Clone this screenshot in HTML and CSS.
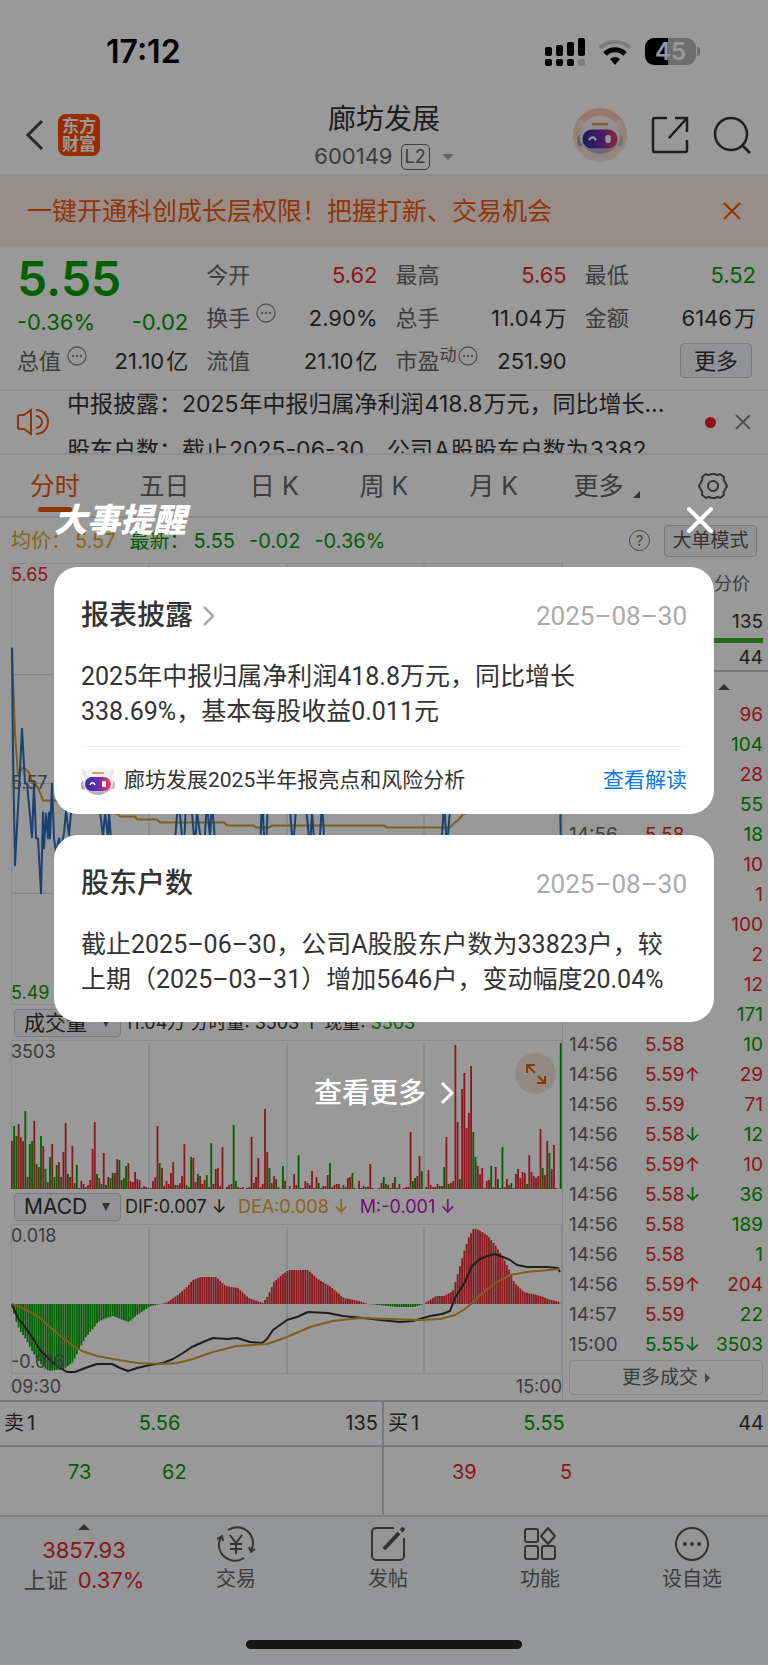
FILE: index.html
```html
<!DOCTYPE html>
<html lang="zh-CN">
<head>
    <meta charset="UTF-8">
    <meta name="viewport" content="width=device-width, initial-scale=1.0">
    <title>廊坊发展 600149</title>
    <link rel="stylesheet" href="styles.css">
</head>
<body>
    <svg class="defs" width="0" height="0">
        <defs>
            <linearGradient id="visor" x1="0" y1="0" x2="1" y2="0">
                <stop offset="0" stop-color="#2b2f9e"/>
                <stop offset="0.5" stop-color="#6a2fb0"/>
                <stop offset="1" stop-color="#f0405a"/>
            </linearGradient>
            <linearGradient id="shell" x1="0" y1="0" x2="0" y2="1">
                <stop offset="0" stop-color="#fbf8f7"/>
                <stop offset="0.7" stop-color="#e6e1e4"/>
                <stop offset="1" stop-color="#a9a3ac"/>
            </linearGradient>
            <symbol id="robot" viewBox="0 0 34 28">
                <path d="M2 1c-2 4-1 8 2 9l5-5C6 5 3 4 2 1zM32 1c2 4 1 8-2 9l-5-5c3 0 6-1 7-4z" fill="#eae5e5"/>
                <ellipse cx="2.500" cy="18" rx="2.500" ry="4.500" fill="#aaa4b0"/>
                <ellipse cx="31.500" cy="18" rx="2.500" ry="4.500" fill="#c4bfc6"/>
                <path d="M17 0C8 0 3 6 2 15c0 7 5 12 15 13 10-1 15-6 15-13C31 6 26 0 17 0z" fill="url(#shell)"/>
                <rect x="11" y="5" width="12" height="2" rx="1" fill="#e39a5b"/>
                <rect x="4" y="10" width="26" height="14" rx="7" fill="url(#visor)"/>
                <path d="M9 18c1-3 4-3 5 0" fill="none" stroke="#fff" stroke-width="1.500"/>
                <rect x="21" y="14" width="4" height="6" rx="1.500" fill="#fff"/>
            </symbol>
            <symbol id="more-dots" viewBox="0 0 20 20">
                <circle cx="10" cy="10" r="9" fill="none" stroke="currentColor" stroke-width="1.300"/>
                <circle cx="6" cy="10" r="1.200" fill="currentColor"/>
                <circle cx="10" cy="10" r="1.200" fill="currentColor"/>
                <circle cx="14" cy="10" r="1.200" fill="currentColor"/>
            </symbol>
        </defs>
    </svg>

    <div class="page">
        <div class="status-bar">
            <span class="time">17:12</span>
            <div class="status-icons">
                <svg width="40" height="28" viewBox="0 0 40 28">
                    <rect x="0" y="9" width="7" height="9" rx="2"/>
                    <rect x="11" y="7" width="7" height="11" rx="2"/>
                    <rect x="22" y="4" width="7" height="14" rx="2"/>
                    <rect x="33" y="0" width="7" height="18" rx="2"/>
                    <rect x="0" y="21" width="7" height="7" rx="2"/>
                    <rect x="11" y="21" width="7" height="7" rx="2"/>
                    <rect x="22" y="21" width="7" height="7" rx="2"/>
                    <rect x="33" y="21" width="7" height="7" rx="2" fill="#d0d0d0"/>
                </svg>
                <svg width="34" height="26" viewBox="0 0 34 26">
                    <path d="M2 9a22 22 0 0 1 30 0" fill="none" stroke="#d0d0d0" stroke-width="4"/>
                    <path d="M7 15a14 14 0 0 1 20 0" fill="none" stroke="#000" stroke-width="5"/>
                    <path d="M17 26l-5-6a8 8 0 0 1 10 0z"/>
                </svg>
                <div class="battery"><span>45</span></div>
            </div>
        </div>

        <header class="top-bar">
            <div class="top-left">
                <button class="icon-btn" aria-label="返回">
                    <svg width="20" height="32" viewBox="0 0 20 32"><path d="M17 2L3 16l14 14" fill="none" stroke="#444" stroke-width="3"/></svg>
                </button>
                <a href="#" class="logo">东方<br>财富</a>
            </div>
            <div class="stock">
                <h1>廊坊发展</h1>
                <div class="code">600149 <span class="level">L2</span><span class="caret"></span></div>
            </div>
            <div class="top-right">
                <button class="icon-btn avatar" aria-label="助手"><svg width="46" height="38"><use href="#robot"/></svg></button>
                <button class="icon-btn" aria-label="分享">
                    <svg width="38" height="38" viewBox="0 0 38 38" fill="none" stroke="#333" stroke-width="2.500"><path d="M16 2H4a2 2 0 0 0-2 2v30a2 2 0 0 0 2 2h30a2 2 0 0 0 2-2V24M24 2h12v14M36 2L18 22"/></svg>
                </button>
                <button class="icon-btn" aria-label="搜索">
                    <svg width="38" height="38" viewBox="0 0 38 38" fill="none" stroke="#333" stroke-width="2.500"><circle cx="18" cy="18" r="16"/><path d="M29 29l8 8"/></svg>
                </button>
            </div>
        </header>

        <div class="banner">
            <span>一键开通科创成长层权限！把握打新、交易机会</span>
            <button class="icon-btn" aria-label="关闭">
                <svg width="18" height="18" viewBox="0 0 18 18"><path d="M1 1l16 16M17 1L1 17" stroke="#f05a0a" stroke-width="2"/></svg>
            </button>
        </div>

        <section class="quote">
            <div class="quote-col">
                <div class="price green">5.55</div>
                <div class="cell green"><span>-0.36%</span><span>-0.02</span></div>
                <div class="cell"><label>总值<svg class="dots"><use href="#more-dots"/></svg></label><span>21.10<i>亿</i></span></div>
            </div>
            <div class="quote-col">
                <div class="cell"><label>今开</label><span class="red">5.62</span></div>
                <div class="cell"><label>换手<svg class="dots"><use href="#more-dots"/></svg></label><span>2.90%</span></div>
                <div class="cell"><label>流值</label><span>21.10<i>亿</i></span></div>
            </div>
            <div class="quote-col">
                <div class="cell"><label>最高</label><span class="red">5.65</span></div>
                <div class="cell"><label>总手</label><span>11.04<i>万</i></span></div>
                <div class="cell"><label>市盈<sup>动</sup><svg class="dots tight"><use href="#more-dots"/></svg></label><span>251.90</span></div>
            </div>
            <div class="quote-col">
                <div class="cell"><label>最低</label><span class="green">5.52</span></div>
                <div class="cell"><label>金额</label><span>6146<i>万</i></span></div>
                <div class="cell end"><button class="more-btn">更多</button></div>
            </div>
        </section>

        <section class="news">
            <svg width="32" height="28" viewBox="0 0 32 28" fill="none" stroke="#f05a0a" stroke-width="2"><path d="M14 2v24l-7-5H3a2 2 0 0 1-2-2V9a2 2 0 0 1 2-2h4zM19 8a6 6 0 0 1 0 12M19 2a12 12 0 0 1 0 24"/></svg>
            <div class="news-list">
                <p>中报披露：2025<i>年中报归属净利润</i><i>418.8</i><i>万元，同比增长</i>...</p>
                <p>股东户数：截止<i>2025-06-30</i>，公司<i>A</i><i>股股东户数为</i><i>3382</i></p>
            </div>
            <span class="red-dot"></span>
            <button class="icon-btn" aria-label="关闭"><svg width="16" height="16" viewBox="0 0 16 16"><path d="M1 1l14 14M15 1L1 15" stroke="#888" stroke-width="2"/></svg></button>
        </section>

        <nav class="tabs">
            <button class="active">分时</button>
            <button>五日</button>
            <button>日 K</button>
            <button>周 K</button>
            <button>月 K</button>
            <button class="more-tab">更多<span class="corner"></span></button>
            <button aria-label="设置">
                <svg width="30" height="28" viewBox="0 0 30 28" fill="none" stroke="#555" stroke-width="2"><path d="M8 2Q11 4 13 2h4q2 2 5 0l4 3q-1 3 1 5l2 4-2 4q-2 2-1 5l-4 3q-3-2-5 0h-4q-2-2-5 0l-4-3q1-3-1-5l-2-4 2-4q2-2 1-5z" stroke-linejoin="round"/><circle cx="15" cy="14" r="5"/></svg>
            </button>
        </nav>

        <div class="info-row">
            <span class="gold">均价：<b>5.57</b></span>
            <span class="green latest">最新：<b>5.55</b></span>
            <span class="green">-0.02</span>
            <span class="green">-0.36%</span>
            <span class="help">?</span>
            <button class="mode-btn">大单模式</button>
        </div>

        <main class="board">
            <div class="charts">
                <div class="chart price-chart">
                    <svg viewBox="0 0 551 443" preserveAspectRatio="none">
                        <path class="grid" d="M0 0H551V443H0zM0 112H551M0 221H551M0 331H551M138 0V443M276 0V443M413 0V443"/>
                        <path class="line gold-line" d="M1 85L2 118 4 171 7 213 12 205 15 207 18 210 21 220 27 225 32 238 44 238 60 246 90 246 107 252 109 254 124 254 126 257 146 257 149 260 213 260 216 263 242 263 245 265 258 265 261 263 373 263 376 265 439 265 444 260 447 258 452 252 480 240 550 238"/>
                        <path class="line blue-line" d="M1 85L2 188 4 303 9 208 11 166 14 221 16 221 21 275 23 221 25 276 27 276 30 331 32 250 33 286 35 251 37 276 38 250 39 276 41 221 43 276 45 290 48 276 50 285 53 271 55 248 58 273 61 240 88 240 92 275 94 250 97 275 98 250 101 290 163 290 167 240 168 240 172 285 173 285 175 240 180 240 184 285 186 250 191 285 193 285 196 240 199 275 201 240 205 290 249 290 251 235 254 290 255 290 257 235 278 235 282 285 286 235 294 235 299 285 301 250 304 290 308 290 311 240 314 290 430 290 433 240 436 285 440 235 470 230 549 235 550 290"/>
                    </svg>
                    <span class="mark top red">5.65</span>
                    <span class="mark middle">5.57</span>
                    <span class="mark bottom green">5.49</span>
                </div>
                <div class="chart-head">
                    <select aria-label="指标一"><option>成交量</option></select>
                    <span>11.04<i>万</i> 分时量: 3503 ↑ 现量: <em class="green">3503</em></span>
                </div>
                <div class="chart volume-chart">
                    <svg viewBox="0 0 551 149" preserveAspectRatio="none">
                        <path class="grid" d="M0 0H551V149H0zM138 3V149M276 3V149M413 3V149"/>
                        <g id="volume"></g>
                    </svg>
                    <span class="mark top">3503</span>
                    <button class="expand" aria-label="放大">
                        <svg width="22" height="22" viewBox="0 0 22 22" fill="none" stroke="#f05a0a" stroke-width="2"><path d="M2 10V2h8M2 2l8 8M20 13v7h-8M20 20l-7-7"/></svg>
                    </button>
                </div>
                <div class="chart-head">
                    <select aria-label="指标二"><option>MACD</option></select>
                    <span>DIF:0.007 ↓</span>
                    <span class="gold">DEA:0.008 ↓</span>
                    <span class="purple">M:-0.001 ↓</span>
                </div>
                <div class="chart macd-chart">
                    <svg viewBox="0 0 551 150" preserveAspectRatio="none">
                        <path class="grid" d="M0 0H551V150H0zM138 3V150M276 3V150M413 3V150"/>
                        <g id="macd"></g>
                        <path class="line dark-line" d="M1 81L7 94 14 103 21 113 29 126 39 136 47 143 56 148 64 148 69 146 77 143 86 140 101 140 109 144 117 147 126 144 139 141 152 139 162 135 172 129 181 123 192 118 202 114 216 115 226 114 239 118 251 119 256 115 262 106 276 96 286 93 297 88 317 89 332 92 352 94 369 96 389 98 402 97 419 92 431 90 439 87 444 74 454 58 461 42 469 35 476 32 484 30 492 33 499 36 506 41 516 43 536 43 547 44 549 48"/>
                        <path class="line gold-line" d="M1 80L16 86 29 94 46 109 61 121 71 127 86 132 102 135 126 139 149 140 166 139 182 135 202 128 226 122 256 120 276 113 299 103 322 97 349 94 379 95 409 96 429 95 444 91 454 85 462 78 476 65 486 58 499 51 516 48 549 45"/>
                    </svg>
                    <span class="mark top">0.018</span>
                    <span class="mark bottom">-0.016</span>
                </div>
                <div class="hours"><span>09:30</span><span>15:00</span></div>
            </div>

            <aside class="trades">
                <div class="trade-tabs"><button class="active">明细</button><button>分价</button></div>
                <div class="level-row"><span>卖1</span><span class="green">5.56</span><span>135</span></div>
                <div class="ratio"></div>
                <div class="level-row"><span>买1</span><span class="green">5.55</span><span>44</span></div>
                <div class="sort"><span class="up-arrow"></span></div>
                <table>
                    <tbody>
                        <tr><td>14:56</td><td class="red">5.58</td><td class="red">96</td></tr>
                        <tr><td>14:56</td><td class="red">5.58</td><td class="green">104</td></tr>
                        <tr><td>14:56</td><td class="red">5.58</td><td class="red">28</td></tr>
                        <tr><td>14:56</td><td class="red">5.58</td><td class="green">55</td></tr>
                        <tr><td>14:56</td><td class="red">5.58</td><td class="green">18</td></tr>
                        <tr><td>14:56</td><td class="red">5.58</td><td class="red">10</td></tr>
                        <tr><td>14:56</td><td class="red">5.58</td><td class="red">1</td></tr>
                        <tr><td>14:56</td><td class="red">5.58</td><td class="red">100</td></tr>
                        <tr><td>14:56</td><td class="red">5.58</td><td class="red">2</td></tr>
                        <tr><td>14:56</td><td class="red">5.58</td><td class="red">12</td></tr>
                        <tr><td>14:56</td><td class="red">5.58</td><td class="green">171</td></tr>
                        <tr><td>14:56</td><td class="red">5.58</td><td class="green">10</td></tr>
                        <tr><td>14:56</td><td class="red">5.59↑</td><td class="red">29</td></tr>
                        <tr><td>14:56</td><td class="red">5.59</td><td class="red">71</td></tr>
                        <tr><td>14:56</td><td class="red">5.58<em class="green">↓</em></td><td class="green">12</td></tr>
                        <tr><td>14:56</td><td class="red">5.59↑</td><td class="red">10</td></tr>
                        <tr><td>14:56</td><td class="red">5.58<em class="green">↓</em></td><td class="green">36</td></tr>
                        <tr><td>14:56</td><td class="red">5.58</td><td class="green">189</td></tr>
                        <tr><td>14:56</td><td class="red">5.58</td><td class="green">1</td></tr>
                        <tr><td>14:56</td><td class="red">5.59↑</td><td class="red">204</td></tr>
                        <tr><td>14:57</td><td class="red">5.59</td><td class="green">22</td></tr>
                        <tr><td>15:00</td><td class="green">5.55↓</td><td class="green">3503</td></tr>
                    </tbody>
                </table>
                <button class="more-trades">更多成交<span class="right-arrow"></span></button>
            </aside>
        </main>

        <section class="depth">
            <div class="side">
                <div class="depth-row"><span>卖<i>1</i></span><span class="green">5.56</span><span>135</span></div>
                <div class="queue green"><span>73</span><span>62</span></div>
            </div>
            <div class="side">
                <div class="depth-row"><span>买<i>1</i></span><span class="green">5.55</span><span>44</span></div>
                <div class="queue red"><span>39</span><span>5</span></div>
            </div>
        </section>

        <footer class="bottom-nav">
            <div class="nav-items">
                <button class="index">
                    <span class="up-arrow"></span>
                    <span class="red">3857.93</span>
                    <span class="index-row">上证 <em class="red">0.37%</em></span>
                </button>
                <button>
                    <svg width="40" height="36" viewBox="0 0 40 36" fill="none" stroke="#555" stroke-width="2"><path d="M12 4a16 16 0 0 1 23 21M28 32A16 16 0 0 1 5 11M1 13l5-3 1 5M39 23l-4 3-2-5M14 9l6 8 6-8M20 17v11M14 18h12M14 23h12"/></svg>
                    <span>交易</span>
                </button>
                <button>
                    <svg width="34" height="36" viewBox="0 0 34 36" fill="none" stroke="#555" stroke-width="2"><path d="M23 2H5a4 4 0 0 0-4 4v24a4 4 0 0 0 4 4h24a4 4 0 0 0 4-4V12"/><path d="M13 23L28 7M30 5l3-3" stroke-width="4"/></svg>
                    <span>发帖</span>
                </button>
                <button>
                    <svg width="34" height="36" viewBox="0 0 34 36" fill="none" stroke="#555" stroke-width="2"><rect x="2" y="3" width="13" height="13" rx="2"/><path d="M25 2l7 8-7 8-7-8z" stroke-linejoin="round"/><rect x="2" y="20" width="13" height="13" rx="2"/><rect x="19" y="20" width="13" height="13" rx="2"/></svg>
                    <span>功能</span>
                </button>
                <button>
                    <svg width="36" height="36" viewBox="0 0 36 36" fill="#555"><circle cx="18" cy="18" r="16" fill="none" stroke="#555" stroke-width="2"/><circle cx="11" cy="18" r="2"/><circle cx="18" cy="18" r="2"/><circle cx="25" cy="18" r="2"/></svg>
                    <span>设自选</span>
                </button>
            </div>
            <div class="home-bar"></div>
        </footer>

        <div class="overlay" role="dialog" aria-label="大事提醒">
            <div class="overlay-head">
                <h2>大事提醒</h2>
                <button class="icon-btn" aria-label="关闭">
                    <svg width="28" height="28" viewBox="0 0 28 28"><path d="M3 3l22 22M25 3L3 25" stroke="#fff" stroke-width="4" stroke-linecap="round"/></svg>
                </button>
            </div>
            <article class="card">
                <div class="card-head">
                    <h3>报表披露<svg width="14" height="22" viewBox="0 0 14 22"><path d="M2 2l9 9-9 9" fill="none" stroke="#aaa" stroke-width="2.500"/></svg></h3>
                    <time>2025–08–30</time>
                </div>
                <p>2025年中报归属净利润418.8万元，同比增长338.69%，基本每股收益0.011元</p>
                <div class="card-foot">
                    <svg width="34" height="28"><use href="#robot"/></svg>
                    <span>廊坊发展2025半年报亮点和风险分析</span>
                    <a href="#">查看解读</a>
                </div>
            </article>
            <article class="card">
                <div class="card-head">
                    <h3>股东户数</h3>
                    <time>2025–08–30</time>
                </div>
                <p>截止2025–06–30，公司A股股东户数为33823户，较上期（2025–03–31）增加5646户，变动幅度20.04%</p>
            </article>
            <a href="#" class="see-more">查看更多<svg width="14" height="24" viewBox="0 0 14 24"><path d="M2 2l10 10L2 22" fill="none" stroke="#fff" stroke-width="3"/></svg></a>
        </div>
    </div>

    <script>
        // minute volumes, negative = falling minute
        const volumes = [
            48, -63, -53, 65, 52, 48, -78, 12, -45, -48, 68, -25, 22, -53, 43, -20, 7, -32, 45, -12,
            -24, 27, -12, 37, 66, -15, 12, 43, 6, -24, 1, 8, 5, -2, 4, 9, 40, 67, -15, 11,
            -5, 36, -4, 12, -11, -16, 16, 30, -29, 9, -11, -23, 26, 8, 7, 17, 10, 9, -1, 3,
            2, 1, -1, 8, 12, 63, -26, 21, 3, 8, 5, 16, 27, -4, 4, 6, 13, 45, -4, 2,
            -32, 31, 7, -15, 13, 5, 9, -14, 2, -46, 5, 20, 21, 3, 42, 0, -2, 4, 5, -64,
            -8, 2, 1, 2, 0, 1, -2, 52, 6, 12, 31, 2, 5, 80, 37, -21, 6, 13, -10, 2,
            0, -23, 8, 0, 3, 0, 15, 4, -34, 1, -1, 8, 6, 4, 18, 1, 12, -6, -1, 3,
            3, 14, -26, 2, 4, 5, 5, 1, -4, 2, 11, 12, -16, 1, 0, 8, 1, -3, 2, 2,
            25, 1, 0, 0, 1, 6, -12, 5, -4, 1, 6, -12, -1, 5, 0, 1, 2, 2, 57, -8,
            -11, 13, 33, -18, 0, 2, 19, 4, 2, 2, 5, -3, 3, -22, 52, -5, 6, 8, 144, 67,
            -10, 100, 116, 61, 76, 123, -57, -32, 23, 15, 21, 1, 8, 9, -23, 2, 22, -10, 1, -42,
            2, 10, 4, -6, 1, 15, 20, 11, 17, 16, -5, 34, 17, 13, 11, 13, 60, -21, 14, 48,
            -36, 20, 44, 1, 0, -146
        ];

        // [x, height] knots of the MACD histogram
        const knots = [
            [0, -1], [5, -20], [9, -28], [14, -35], [19, -45], [24, -53], [31, -63], [37, -67], [52, -65], [61, -58],
            [67, -46], [74, -33], [81, -25], [86, -18], [92, -15], [101, -12], [111, -16], [117, -18], [124, -12], [131, -7],
            [139, -2], [149, 0], [154, 1], [166, 9], [174, 16], [181, 24], [189, 27], [204, 27], [214, 18], [226, 16],
            [237, 6], [251, 1], [256, 8], [262, 22], [271, 30], [277, 34], [296, 34], [306, 25], [319, 17], [332, 6],
            [347, 3], [356, 0], [366, -1], [386, -3], [402, -3], [412, 0], [424, 8], [432, 8], [441, 13], [446, 31],
            [452, 52], [457, 67], [462, 76], [469, 73], [476, 68], [484, 58], [492, 45], [497, 35], [502, 22], [512, 12],
            [529, 8], [536, 5], [548, 2], [551, -5]
        ];

        const step = 551 / volumes.length;

        function drawBar(group, x, y, value) {
            const rect = document.createElementNS('http://www.w3.org/2000/svg', 'rect');
            rect.setAttribute('x', x);
            rect.setAttribute('y', y);
            rect.setAttribute('width', 1.8);
            rect.setAttribute('height', Math.abs(value));
            rect.setAttribute('class', value < 0 ? 'bar-down' : 'bar-up');
            group.appendChild(rect);
        }

        const volume = document.getElementById('volume');
        volumes.forEach((v, i) => drawBar(volume, i * step, 149 - Math.abs(v), v));

        const macd = document.getElementById('macd');
        let k = 0;
        for (let i = 0; i < volumes.length; i++) {
            const x = i * step;
            while (k < knots.length - 2 && knots[k + 1][0] < x) k++;
            const [x0, h0] = knots[k];
            const [x1, h1] = knots[k + 1];
            const h = h0 + (h1 - h0) * (x - x0) / (x1 - x0);
            drawBar(macd, x, h < 0 ? 80 : 80 - h, h);
        }
    </script>
</body>
</html>
```
FILE: styles.css
```css
* {
    box-sizing: border-box;
}

body {
    margin: 0;
    font-family: Inter, "Noto Sans CJK SC", sans-serif;
    font-size: 22px;
    line-height: 30px;
    color: #333;
    background: #fff;
}

h1, h2, h3, p {
    margin: 0;
}

i, em {
    font-style: normal;
}

a {
    text-decoration: none;
}

svg {
    display: block;
}

button, select {
    font: inherit;
    color: inherit;
    background: none;
    border: none;
    padding: 0;
    margin: 0;
    cursor: pointer;
}

.defs {
    position: absolute;
}

.page {
    position: relative;
    min-height: 100vh;
}

.red { color: #e8262d; }
.green { color: #00a000; }
.gold { color: #e8a52c; }
.purple { color: #c411c8; }

.icon-btn {
    display: flex;
    align-items: center;
    justify-content: center;
}

/* Status bar */
.status-bar {
    display: flex;
    justify-content: space-between;
    align-items: center;
    height: 101px;
    padding: 2px 72px 0 106px;
    color: #000;
}

.time {
    font-size: 32px;
    font-weight: 600;
}

.status-icons {
    display: flex;
    align-items: center;
    gap: 13px;
}

.battery {
    position: relative;
    width: 51px;
    height: 27px;
    border-radius: 9px;
    background: linear-gradient(90deg, #000 45%, #b7b7b7 45%);
    color: #fff;
    font-size: 24px;
    font-weight: 600;
    line-height: 27px;
    text-align: center;
}

.battery::after {
    content: "";
    position: absolute;
    right: -4px;
    top: 9px;
    width: 3px;
    height: 9px;
    border-radius: 0 3px 3px 0;
    background: #b7b7b7;
}

/* Header */
.top-bar {
    display: grid;
    grid-template-columns: 1fr auto 1fr;
    grid-template-rows: 68px;
    align-items: center;
    height: 75px;
    padding: 0 17px;
    border-bottom: 2px solid #ebebeb;
}

.top-left, .top-right {
    display: flex;
    align-items: center;
}

.top-left {
    gap: 13px;
    padding-left: 8px;
}

.top-right {
    justify-content: flex-end;
    gap: 24px;
}

.logo {
    width: 42px;
    height: 42px;
    padding-top: 3px;
    border-radius: 8px;
    background: #ff4a00;
    color: #fff;
    font-size: 17px;
    font-weight: 700;
    line-height: 18px;
    text-align: center;
}

.stock {
    padding-top: 6px;
    text-align: center;
}

.stock h1 {
    font-size: 28px;
    font-weight: 400;
    line-height: 37px;
}

.code {
    display: flex;
    align-items: center;
    justify-content: center;
    gap: 8px;
    font-size: 22px;
    line-height: 37px;
    color: #666;
}

.level {
    padding: 0 3px;
    border: 1px solid #666;
    border-radius: 5px;
    font-size: 18px;
    line-height: 24px;
}

.caret {
    margin-left: 4px;
    border: 6px solid transparent;
    border-top-color: #aaa;
    border-bottom: 0;
}

.avatar {
    width: 54px;
    height: 54px;
    border-radius: 50%;
    background: linear-gradient(#ffc8ae, #f2e6e0);
}

.banner {
    display: flex;
    align-items: center;
    justify-content: space-between;
    height: 70px;
    padding: 0 27px;
    background: #ffece4;
    color: #f05a0a;
    font-size: 25px;
}

/* Quote */
.quote {
    display: grid;
    grid-template-columns: repeat(4, 1fr);
    gap: 18px;
    height: 145px;
    padding: 7px 12px 0 17px;
    border-bottom: 2px solid #ebebeb;
}

.quote-col {
    min-width: 0;
}

.price {
    height: 52px;
    padding-top: 1px;
    font-size: 48px;
    font-weight: 600;
    line-height: 50px;
}

.cell {
    display: flex;
    justify-content: space-between;
    align-items: center;
    height: 43px;
    white-space: nowrap;
}

.price + .cell {
    height: 34px;
}

.cell label {
    display: flex;
    align-items: center;
    color: #666;
}

.cell i {
    margin-left: 2px;
}

.cell sup {
    font-size: 17px;
    line-height: 20px;
    margin-bottom: 12px;
}

.dots {
    width: 20px;
    height: 20px;
    margin: 0 0 10px 6px;
    color: #888;
}

.dots.tight {
    margin-left: 1px;
}

.cell.end {
    justify-content: flex-end;
}

.more-btn {
    width: 72px;
    height: 35px;
    margin-right: 4px;
    border: 1px solid #c8ccd4;
    border-radius: 4px;
    background: #f4f5f8;
    line-height: 32px;
}

/* News ticker */
.news {
    display: flex;
    align-items: center;
    height: 64px;
    padding: 0 17px;
    border-bottom: 2px solid #ebebeb;
    overflow: hidden;
}

.news-list {
    align-self: flex-start;
    flex: 1;
    min-width: 0;
    margin-left: 18px;
    font-size: 23px;
}

.news-list p {
    height: 46px;
    line-height: 26px;
    white-space: nowrap;
}

.news-list i {
    margin-left: 1px;
}

.red-dot {
    width: 11px;
    height: 11px;
    margin-right: 19px;
    border-radius: 50%;
    background: #f02020;
}

/* Tabs */
.tabs {
    display: grid;
    grid-template-columns: repeat(7, 1fr);
    height: 63px;
    border-bottom: 2px solid #dcdfe4;
}

.tabs button {
    position: relative;
    display: flex;
    align-items: center;
    justify-content: center;
    font-size: 25px;
    color: #666;
}

.tabs .more-tab {
    padding-right: 10px;
}

.tabs .active {
    color: #f05a0a;
}

.tabs .active::after {
    content: "";
    position: absolute;
    bottom: 4px;
    width: 34px;
    height: 5px;
    border-radius: 3px;
    background: #f05a0a;
}

.corner {
    position: absolute;
    right: 18px;
    bottom: 18px;
    border-left: 7px solid transparent;
    border-bottom: 7px solid #555;
}

.info-row {
    display: flex;
    align-items: center;
    gap: 14px;
    height: 45px;
    padding: 0 11px;
    font-size: 20px;
}

.info-row b {
    margin-left: 4px;
    font-weight: 400;
}

.help {
    width: 21px;
    height: 21px;
    margin-left: auto;
    border: 1px solid #777;
    border-radius: 50%;
    color: #777;
    font-size: 15px;
    line-height: 19px;
    text-align: center;
}

.mode-btn {
    width: 93px;
    height: 32px;
    border: 1px solid #c8ccd4;
    border-radius: 4px;
    background: #f4f5f8;
    color: #555;
    font-size: 19px;
    line-height: 28px;
}

/* Charts */
.board {
    display: grid;
    grid-template-columns: 1fr 205px;
    border-bottom: 2px solid #c8ccd4;
}

.charts {
    min-width: 0;
    padding-left: 11px;
    border-right: 1px solid #dcdfe4;
}

.chart {
    position: relative;
}

.chart > svg {
    width: 100%;
    height: 100%;
}

.price-chart { height: 442px; }
.volume-chart { height: 149px; }
.macd-chart { height: 150px; }

.grid {
    fill: none;
    stroke: #d2d4dc;
    stroke-width: 1;
}

.line {
    fill: none;
    stroke-width: 2;
    stroke-linejoin: round;
}

.gold-line { stroke: #dc9b28; }
.blue-line { stroke: #2a6fc0; }
.dark-line { stroke: #333; }
.bar-up { fill: #e8262d; }
.bar-down { fill: #00a000; }

.mark {
    position: absolute;
    left: 0;
    font-size: 18px;
    line-height: 22px;
}

.mark:not(.red):not(.green) {
    color: #666;
}

.mark.top { top: 1px; }
.mark.middle { top: 209px; }
.mark.bottom { bottom: 1px; }

.chart-head {
    display: flex;
    align-items: center;
    gap: 11px;
    height: 35px;
    padding-left: 3px;
    font-size: 18px;
    white-space: nowrap;
}

.chart-head select {
    appearance: none;
    width: 107px;
    height: 28px;
    margin-right: -7px;
    padding-left: 9px;
    border: 1px solid #c8ccd4;
    border-radius: 4px;
    background: #f4f5f8 url("data:image/svg+xml,%3Csvg xmlns='http://www.w3.org/2000/svg' width='8' height='8'%3E%3Cpath d='M0 0h8L4 8z' fill='%23555'/%3E%3C/svg%3E") no-repeat right 10px center;
    font-size: 21px;
    line-height: 26px;
}

.expand {
    position: absolute;
    right: 6px;
    top: 13px;
    display: flex;
    align-items: center;
    justify-content: center;
    width: 41px;
    height: 41px;
    border-radius: 50%;
    background: #f4e6da;
}

.hours {
    display: flex;
    justify-content: space-between;
    font-size: 18px;
    line-height: 26px;
    color: #666;
}

/* Trade list */
.trades {
    padding: 0 5px 0 6px;
}

.trade-tabs {
    display: flex;
    justify-content: space-between;
    height: 42px;
    padding: 0 13px;
    font-size: 18px;
    line-height: 40px;
    color: #666;
}

.trade-tabs .active {
    color: #f05a0a;
}

.level-row {
    display: grid;
    grid-template-columns: 1fr 1fr 1fr;
    height: 33px;
    font-size: 19px;
    line-height: 33px;
}

.ratio + .level-row {
    height: 27px;
    line-height: 29px;
}

.level-row span:last-child {
    text-align: right;
}

.ratio {
    height: 5px;
    background: #3fae29;
}

.sort {
    display: flex;
    justify-content: flex-end;
    height: 30px;
    margin: 0 -5px;
    padding: 12px 38px 0 0;
    border-top: 2px solid #c8ccd4;
}

.up-arrow {
    width: 0;
    height: 0;
    border: 6px solid transparent;
    border-bottom-color: #555;
    border-top: 0;
}

.trades table {
    width: 100%;
    border-collapse: collapse;
    font-size: 19px;
}

.trades td {
    height: 30px;
    padding: 0;
    line-height: 30px;
    white-space: nowrap;
}

.trades td:first-child {
    width: 76px;
    color: #666;
}

.trades td:last-child {
    text-align: right;
}

.more-trades {
    display: flex;
    align-items: center;
    justify-content: center;
    gap: 7px;
    width: 100%;
    height: 35px;
    border: 1px solid #dcdfe4;
    border-radius: 5px;
    color: #666;
    font-size: 19px;
}

.right-arrow {
    border: 5px solid transparent;
    border-left-color: #777;
    border-right: 0;
}

/* Order depth */
.depth {
    display: grid;
    grid-template-columns: 1fr 1fr;
    border-bottom: 2px solid #d2d4d8;
}

.side {
    border-right: 2px solid #c8ccd4;
}

.side + .side {
    border-right: 0;
}

.depth-row {
    display: grid;
    grid-template-columns: 1fr 1fr 1fr;
    padding: 0 4px;
    border-bottom: 2px solid #c8ccd4;
    font-size: 20px;
    line-height: 43px;
}

.depth-row i {
    margin-left: 3px;
}

.depth-row span:nth-child(2) {
    padding-left: 10px;
}

.depth-row span:last-child {
    text-align: right;
}

.queue {
    display: flex;
    height: 68px;
    padding-left: 68px;
    font-size: 20px;
    line-height: 50px;
}

.queue span {
    flex: 0 0 94px;
}

.queue.red span {
    flex-basis: 108px;
}

/* Bottom navigation */
.bottom-nav {
    height: 147px;
    padding-top: 7px;
    background: #f6f8fb;
}

.nav-items {
    display: grid;
    grid-template-columns: 160px repeat(4, 1fr);
    height: 116px;
    align-items: start;
}

.nav-items button {
    display: flex;
    flex-direction: column;
    align-items: center;
    padding-top: 2px;
    font-size: 20px;
    color: #666;
}

.nav-items svg {
    margin-bottom: 2px;
}

.nav-items .index {
    padding: 0 0 0 8px;
    font-size: 22px;
}

.index .up-arrow {
    margin-bottom: 5px;
}

.index-row {
    display: flex;
    gap: 10px;
}

.home-bar {
    width: 36%;
    height: 9px;
    margin: 0 auto;
    border-radius: 5px;
    background: #252525;
}

/* Reminder dialog */
.overlay {
    position: absolute;
    inset: 0;
    display: flex;
    flex-direction: column;
    padding: 500px 54px 0;
    background: rgba(0, 0, 0, 0.4);
}

.overlay-head {
    display: flex;
    justify-content: space-between;
    align-items: center;
    height: 40px;
    margin-bottom: 27px;
}

.overlay-head h2 {
    font-size: 33px;
    font-weight: 900;
    font-style: italic;
    line-height: 44px;
    color: #fff;
}

.card {
    padding: 27px 27px 0;
    margin-bottom: 21px;
    border-radius: 24px;
    background: #fff;
    font-family: Roboto, "Noto Sans CJK SC", sans-serif;
}

.card-head {
    display: flex;
    justify-content: space-between;
    align-items: center;
    height: 43px;
    margin-bottom: 22px;
}

.card h3 {
    display: flex;
    align-items: center;
    gap: 9px;
    font-size: 28px;
    font-weight: 500;
}

.card time {
    font-size: 26px;
    color: #aaa;
}

.card p {
    padding-bottom: 25px;
    font-size: 25px;
    line-height: 35px;
}

.card-foot {
    display: flex;
    align-items: center;
    gap: 9px;
    margin-top: -8px;
    padding: 17px 0;
    border-top: 1px solid #eee;
    font-size: 21px;
    line-height: 33px;
}

.card-foot a {
    margin-left: auto;
    color: #0a78e6;
}

.see-more {
    display: flex;
    align-items: center;
    justify-content: center;
    gap: 14px;
    margin-top: 30px;
    font-size: 28px;
    font-weight: 500;
    line-height: 40px;
    color: #fff;
}
```
